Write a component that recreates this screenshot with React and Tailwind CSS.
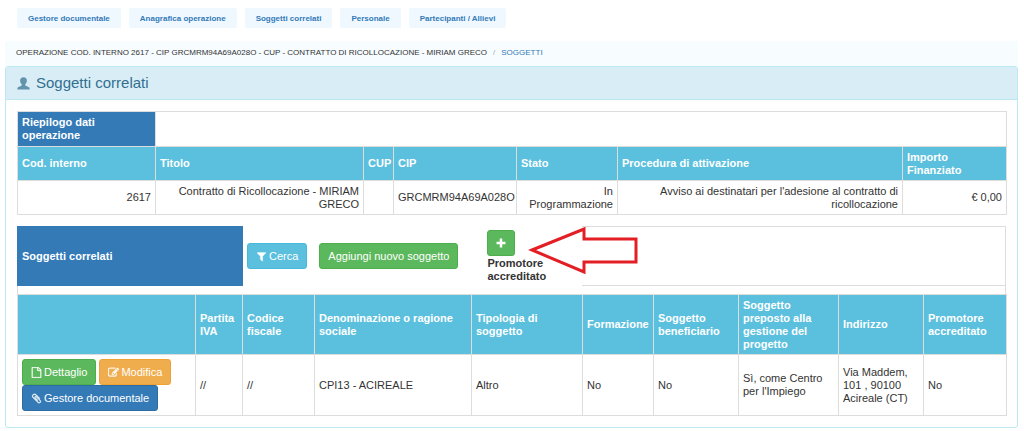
import React from "react";

const TABS = [
  "Gestore documentale",
  "Anagrafica operazione",
  "Soggetti correlati",
  "Personale",
  "Partecipanti / Allievi",
];

const SUMMARY_COLS = [
  { label: "Cod. interno", width: "w-[138px]", value: "2617" },
  { label: "Titolo", width: "w-[208px]", value: "Contratto di Ricollocazione - MIRIAM GRECO" },
  { label: "CUP", width: "w-[30px]", value: "" },
  { label: "CIP", width: "w-[123px]", value: "GRCMRM94A69A028O" },
  { label: "Stato", width: "w-[101px]", value: "In Programmazione" },
  {
    label: "Procedura di attivazione",
    width: "w-[285px]",
    value: "Avviso ai destinatari per l'adesione al contratto di ricollocazione",
  },
  { label: "Importo Finanziato", width: "w-[104px]", value: "€ 0,00" },
];

const SUBJECT_COLS = [
  { label: "Partita IVA", width: "w-[47px]", value: "//" },
  { label: "Codice fiscale", width: "w-[72px]", value: "//" },
  { label: "Denominazione o ragione sociale", width: "w-[157px]", value: "CPI13 - ACIREALE" },
  { label: "Tipologia di soggetto", width: "w-[111px]", value: "Altro" },
  { label: "Formazione", width: "w-[71px]", value: "No" },
  { label: "Soggetto beneficiario", width: "w-[85px]", value: "No" },
  {
    label: "Soggetto preposto alla gestione del progetto",
    width: "w-[100px]",
    value: "Sì, come Centro per l'Impiego",
  },
  { label: "Indirizzo", width: "w-[85px]", value: "Via Maddem, 101 , 90100 Acireale (CT)" },
  { label: "Promotore accreditato", width: "w-[83px]", value: "No" },
];

const ICONS = {
  file: "M1596 380q28 28 48 76t20 88v1152q0 40-28 68t-68 28h-1344q-40 0-68-28t-28-68v-1600q0-40 28-68t68-28h896q40 0 88 20t76 48zm-444-244v376h376q-10-29-22-41l-313-313q-12-12-41-22zm384 1528v-1024h-416q-40 0-68-28t-28-68v-416h-768v1536h1280z",
  edit: "M888 1184l116-116-152-152-116 116v56h96v96h56zm440-720q-16-16-33 1l-350 350q-17 17-1 33t33-1l350-350q17-17 1-33zm80 594v190q0 119-84.5 203.5t-203.5 84.5h-832q-119 0-203.5-84.5t-84.5-203.5v-832q0-119 84.5-203.5t203.5-84.5h832q63 0 117 25 15 7 18 23 3 17-9 29l-49 49q-14 14-32 8-23-6-45-6h-832q-66 0-113 47t-47 113v832q0 66 47 113t113 47h832q66 0 113-47t47-113v-126q0-13 9-22l64-64q15-15 35-7t20 29zm-96-738l288 288-672 672h-288v-288zm444 132l-92 92-288-288 92-92q28-28 68-28t68 28l152 152q28 28 28 68t-28 68z",
  filter: "M1595 295q17 41-14 70l-493 493v742q0 42-39 59-13 5-25 5-27 0-45-19l-256-256q-19-19-19-45v-486l-493-493q-31-29-14-70 17-39 59-39h1280q42 0 59 39z",
  clip: "M1596 1385q0 117-79 196t-196 79q-135 0-235-100l-777-776q-113-115-113-271 0-159 110-270t269-111q158 0 273 113l605 606q10 10 10 22 0 16-30.5 46.5t-46.5 30.5q-13 0-23-10l-606-607q-79-77-181-77-106 0-179 75t-73 181q0 105 76 181l776 777q63 63 145 63 64 0 106-42t42-106q0-82-63-145l-581-581q-26-24-60-24-29 0-48 19t-19 48q0 32 25 59l410 410q10 10 10 22 0 16-31 47t-47 31q-12 0-22-10l-410-410q-63-61-63-149 0-82 57-139t139-57q88 0 149 63l581 581q100 98 100 235z",
};

function Icon({ name }) {
  return (
    <svg
      viewBox="0 0 1792 1792"
      className="w-[11px] h-[11px]"
      fill="currentColor"
      stroke="currentColor"
      strokeWidth="50"
      aria-hidden="true"
    >
      <path d={ICONS[name]} />
    </svg>
  );
}

function Button({ icon, color, children }) {
  return (
    <button
      type="button"
      className={`inline-flex items-center justify-center gap-[2px] h-[26px] px-2 rounded-[3px] border text-white whitespace-nowrap cursor-pointer ${color}`}
    >
      {icon && <Icon name={icon} />}
      {children}
    </button>
  );
}

const GREEN = "bg-[#5cb85c] border-[#4cae4c]";
const BLUE = "bg-[#337ab7] border-[#2e6da4]";
const ORANGE = "bg-[#f0ad4e] border-[#eea236]";
const CYAN = "bg-[#5bc0de] border-[#46b8da]";

const TH = "border border-[#ddd] bg-[#5bc0de] px-1 py-[3px] text-left font-bold text-white";
const TD = "border border-[#ddd] px-1 py-[3px]";

export default function App() {
  return (
    <div className="bg-white pt-2 pl-[5px] pr-[6px] pb-1 text-[11px] leading-[13px] text-[#333] font-['Liberation_Sans',Arial,sans-serif]">
      <nav className="flex flex-wrap gap-2 px-3">
        {TABS.map((tab) => (
          <a
            key={tab}
            href="#"
            className="flex h-5 items-center rounded-xs bg-[#f0f8ff] px-[11px] text-[8px] font-bold text-[#337ab7]"
          >
            {tab}
          </a>
        ))}
      </nav>

      <div className="mt-[13px] flex h-[25px] items-center bg-[#f7fcff] px-[11px] pb-[2px] text-[8px]">
        <span>
          OPERAZIONE COD. INTERNO 2617 - CIP GRCMRM94A69A028O - CUP - CONTRATTO DI RICOLLOCAZIONE - MIRIAM GRECO
        </span>
        <span className="px-[6px] text-[#aaa]">/</span>
        <a href="#" className="text-[#337ab7]">SOGGETTI</a>
      </div>

      <section className="rounded-[3px] border border-[#bce8f1]">
        <header className="flex h-[33px] items-center gap-[6px] border-b border-[#bce8f1] bg-[#d9edf7] px-[11px] text-[#31708f]">
          {/* user */}
          <svg viewBox="0 0 13 13" className="w-[13px] h-[13px] opacity-70" fill="currentColor" aria-hidden="true">
            <path d="M6.5 0.3C8.7 0.3 10 1.6 9.9 3.6C9.8 5.2 9.2 6.5 8.3 7.3V8.5C9.4 9.2 11.6 9.6 12.3 10.5C12.7 11 12.7 11.7 12.7 12.5H0.3C0.3 11.7 0.3 11 0.7 10.5C1.4 9.6 3.6 9.2 4.7 8.5V7.3C3.8 6.5 3.2 5.2 3.1 3.6C3 1.6 4.3 0.3 6.5 0.3Z" />
          </svg>
          <h3 className="text-[15px] leading-4">Soggetti correlati</h3>
        </header>

        <div className="p-[11px]">
          <table className="w-full table-fixed border-collapse">
            <colgroup>
              {SUMMARY_COLS.map((c) => (
                <col key={c.label} className={c.width} />
              ))}
            </colgroup>
            <thead>
              <tr className="h-[35px]">
                <th className="border border-[#ddd] bg-[#337ab7] px-1 py-[3px] text-left font-bold text-white">
                  Riepilogo dati operazione
                </th>
                <td colSpan={6} className={TD} />
              </tr>
              <tr className="h-[34px]">
                {SUMMARY_COLS.map((c) => (
                  <th key={c.label} className={TH}>{c.label}</th>
                ))}
              </tr>
            </thead>
            <tbody>
              <tr className="h-[34px] text-right">
                {SUMMARY_COLS.map((c) => (
                  <td key={c.label} className={TD}>{c.value}</td>
                ))}
              </tr>
            </tbody>
          </table>

          <div className="mt-[11px] flex h-[60px]">
            <h4 className="flex w-[226px] items-center bg-[#337ab7] px-[5px] font-bold text-white">
              Soggetti correlati
            </h4>
            <div className="flex items-center gap-3 pl-1">
              <Button icon="filter" color={CYAN}>Cerca</Button>
              <Button color={GREEN}>Aggiungi nuovo soggetto</Button>
            </div>
            <div className="relative ml-[29px] w-[95px] pt-1">
              <button
                type="button"
                aria-labelledby="promotore"
                className={`flex h-[26px] w-7 items-center justify-center rounded-[3px] border text-white cursor-pointer ${GREEN}`}
              >
                <svg viewBox="0 0 9 9" className="w-[10px] h-[10px]" fill="currentColor" aria-hidden="true">
                  <path d="M3.4 0.5H5.6V3.4H8.5V5.6H5.6V8.5H3.4V5.6H0.5V3.4H3.4Z" />
                </svg>
              </button>
              <div id="promotore" className="w-[62px] pt-px font-bold">Promotore accreditato</div>
              {/* red arrow pointing at the plus button */}
              <svg
                viewBox="0 0 112 50"
                className="absolute left-10 top-0 w-[112px] h-[50px]"
                fill="#fff"
                stroke="#e31e24"
                strokeWidth="3"
                aria-hidden="true"
              >
                <path d="M5 24L57 3V13H109V36H57V46Z" />
              </svg>
            </div>
            <div className="flex-1 border-y border-r border-[#ddd]" />
          </div>
          <div className="h-2 border-x border-[#ddd]" />

          <table className="w-full table-fixed border-collapse">
            <colgroup>
              <col className="w-[178px]" />
              {SUBJECT_COLS.map((c) => (
                <col key={c.label} className={c.width} />
              ))}
            </colgroup>
            <thead>
              <tr className="h-[60px]">
                <th className={TH} aria-label="Azioni" />
                {SUBJECT_COLS.map((c) => (
                  <th key={c.label} className={TH}>{c.label}</th>
                ))}
              </tr>
            </thead>
            <tbody>
              <tr className="h-[61px]">
                <td className={TD}>
                  <div className="flex flex-wrap gap-x-[3px]">
                    <Button icon="file" color={GREEN}>Dettaglio</Button>
                    <Button icon="edit" color={ORANGE}>Modifica</Button>
                    <Button icon="clip" color={BLUE}>Gestore documentale</Button>
                  </div>
                </td>
                {SUBJECT_COLS.map((c) => (
                  <td key={c.label} className={TD}>{c.value}</td>
                ))}
              </tr>
            </tbody>
          </table>
        </div>
      </section>
    </div>
  );
}
